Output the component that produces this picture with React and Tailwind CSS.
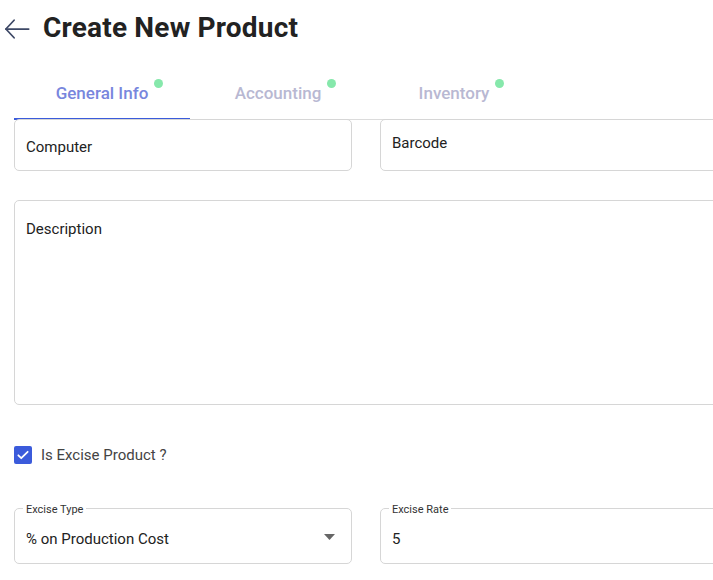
export default function App() {
  const tabs = [
    { label: "General Info", active: true },
    { label: "Accounting", active: false },
    { label: "Inventory", active: false },
  ];

  return (
    <main
      className="w-[713px] h-[580px] overflow-hidden bg-white text-[#222]"
      style={{ fontFamily: "Roboto, 'Liberation Sans', sans-serif" }}
    >
      {/* header */}
      <div className="h-[56px] flex items-center">
        <svg
          className="ml-[3px] mt-[2px]"
          width="28"
          height="28"
          viewBox="0 0 24 24"
          fill="none"
          stroke="#3d4866"
          strokeWidth="1.5"
          strokeLinecap="round"
          strokeLinejoin="round"
        >
          <path d="M22 12H2.5" />
          <path d="M9.5 4.5L2.5 12l7 7.5" />
        </svg>
        <h1 className="ml-[12px] text-[28px] font-bold tracking-[0.2px] text-[#222]">
          Create New Product
        </h1>
      </div>

      {/* tabs */}
      <div className="ml-[14px] flex border-b border-[#dcdcdc] h-[64px]">
        {tabs.map((t) => (
          <div
            key={t.label}
            className={
              t.active
                ? "w-[176px] flex justify-center pt-[25px] border-b-2 border-[#3b5bdb] -mb-px"
                : "w-[176px] flex justify-center pt-[25px]"
            }
          >
            <span
              className={
                t.active
                  ? "relative text-[17px] leading-[24px] font-medium text-[#7886dd]"
                  : "relative text-[17px] leading-[24px] font-medium text-[#b8b8d2]"
              }
            >
              {t.label}
              <span className="absolute -right-[15px] -top-[2px] w-[9px] h-[9px] rounded-full bg-[#86e8ab]" />
            </span>
          </div>
        ))}
      </div>

      {/* form */}
      <div className="ml-[14px] w-[704px] -mt-px">
        <div className="grid grid-cols-[338px_338px] gap-[28px]">
          <div className="h-[52px] border border-[#d6d6d6] rounded-[5px] px-[11px] pt-[16px] text-[15px] leading-[22px]">
            Computer
          </div>
          <div className="h-[52px] border border-[#d6d6d6] rounded-[5px] px-[11px] pt-[12px] text-[15px] leading-[22px]">
            Barcode
          </div>
        </div>

        <div className="mt-[29px] h-[205px] border border-[#d6d6d6] rounded-[5px] px-[11px] pt-[17px] text-[15px] leading-[22px]">
          Description
        </div>

        <label className="mt-[39px] flex items-center gap-[9px]">
          <span className="w-[18px] h-[18px] rounded-[2px] bg-[#3b5bdb] flex items-center justify-center">
            <svg width="14" height="14" viewBox="0 0 24 24" fill="none" stroke="white" strokeWidth="3" strokeLinecap="round" strokeLinejoin="round">
              <path d="M4 12.5l5 5L20 6.5" />
            </svg>
          </span>
          <span className="text-[15px] leading-[22px] text-[#444]">Is Excise Product ?</span>
        </label>

        <div className="mt-[42px] grid grid-cols-[338px_338px] gap-[28px]">
          <div className="relative h-[56px] border border-[#d6d6d6] rounded-[5px] px-[11px] pt-[19px] text-[15px] leading-[22px] flex justify-between">
            <span className="absolute -top-[6px] left-[8px] bg-white px-[3px] text-[11px] leading-[14px] text-[#333]">
              Excise Type
            </span>
            <span>% on Production Cost</span>
            <svg className="mt-[6px] mr-[5px]" width="11" height="6" viewBox="0 0 11 6">
              <path d="M0 0h11L5.5 6z" fill="#666" />
            </svg>
          </div>
          <div className="relative h-[56px] border border-[#d6d6d6] rounded-[5px] px-[11px] pt-[19px] text-[15px] leading-[22px]">
            <span className="absolute -top-[6px] left-[8px] bg-white px-[3px] text-[11px] leading-[14px] text-[#333]">
              Excise Rate
            </span>
            5
          </div>
        </div>
      </div>
    </main>
  );
}
